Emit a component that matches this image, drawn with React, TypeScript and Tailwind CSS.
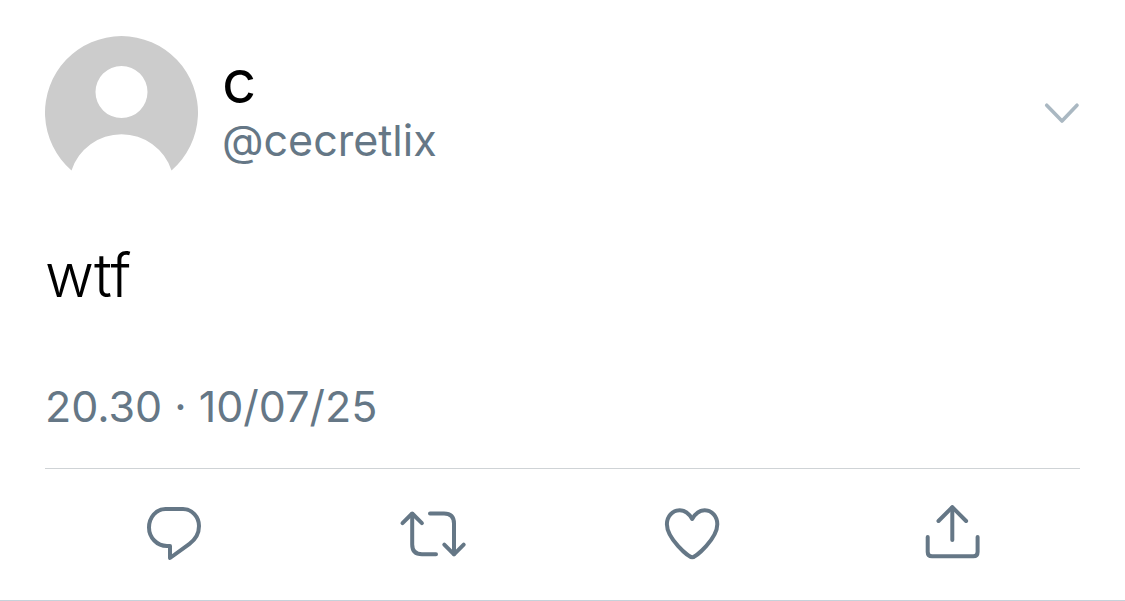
import type { ReactNode } from "react";

const Avatar = () => (
  <svg className="size-[153px] shrink-0" viewBox="0 0 153 153" role="img" aria-label="Profile">
    <path
      fill="#cccccc"
      fillRule="evenodd"
      d="M26.5 134.5 A76.5 76.5 0 1 1 126.5 134.5 A52.6 52.6 0 0 0 26.5 134.5 Z M76.5 30 a26 26 0 1 0 0 52 a26 26 0 0 0 0 -52 Z"
    />
  </svg>
);

type ActionProps = {
  label: string;
  viewBox: string;
  children: ReactNode;
};

const Action = ({ label, viewBox, children }: ActionProps) => (
  <button type="button" aria-label={label} className="flex cursor-pointer justify-center">
    <svg
      className="size-[72px]"
      viewBox={viewBox}
      fill="none"
      stroke="currentColor"
      strokeWidth="4"
      strokeLinecap="round"
      strokeLinejoin="round"
    >
      {children}
    </svg>
  </button>
);

const App = () => {
  return (
    <article className="border-b border-[#c5d2da] bg-white px-[45px] pt-9 pb-[31px] font-['Inter',sans-serif] text-[#657786]">
      <header className="flex items-start">
        <Avatar />
        <div className="ml-6 flex flex-col pt-[15px]">
          <h1 className="text-[60px] leading-[60px] font-normal text-black">c</h1>
          <a href="#cecretlix" className="text-[43px] leading-[58px]">
            @cecretlix
          </a>
        </div>
        <button type="button" aria-label="More options" className="mt-14 ml-auto cursor-pointer">
          <svg
            className="h-10 w-9"
            viewBox="0 0 36 40"
            fill="none"
            stroke="#aab8c2"
            strokeWidth="3.6"
            strokeLinecap="round"
            strokeLinejoin="round"
          >
            <path d="M2.7 13.2 L18 29 L33 13.2" />
          </svg>
        </button>
      </header>

      <p className="mt-[46px] text-[60px] leading-[80px] font-light text-black">wtf</p>

      <p className="mt-[62px] text-[43px] leading-[58px]">
        <time dateTime="2025-07-10T20:30">20.30 · 10/07/25</time>
      </p>

      <footer className="mt-[33px] grid grid-cols-4 border-t border-[#cfd3d6] pt-7">
        <Action label="Reply" viewBox="8 7 72 72">
          <path d="M35.5 19 H53 C62 19 69 27 69 36 C69 43 66 49 59.5 53.8 L40 68 V56 H37 C27 56 19 47.5 19 37.5 C19 27.5 26 19 35.5 19 Z" />
        </Action>
        <Action label="Retweet" viewBox="7 7 72 72">
          <path d="M12.5 33.2 L22.2 23.5 L31.9 33.2" />
          <path d="M22.2 24 V54.5 Q22.2 64.3 32 64.3 H46" />
          <path d="M40 23.4 H54 Q64 23.4 64 33.4 V64" />
          <path d="M54.3 54.6 L64 64.3 L73.7 54.6" />
        </Action>
        <Action label="Like" viewBox="6 7 72 72">
          <path d="M42.2 29 C38.8 23 34.6 20.2 29.7 20.2 C22.3 20.2 16.9 26.6 16.9 34.2 C16.9 48.5 38.5 67.2 42.2 67.2 C45.9 67.2 67.3 48.5 67.3 34.2 C67.3 26.6 62 20.2 54.7 20.2 C49.8 20.2 45.6 23 42.2 29 Z" />
        </Action>
        <Action label="Share" viewBox="5 7 72 72">
          <path d="M28.5 31 L42.3 17.2 L56.1 31" />
          <path d="M42.3 17.5 V50" />
          <path d="M17.7 47 V62 Q17.7 66.3 22 66.3 H63.3 Q67.6 66.3 67.6 62 V47" />
        </Action>
      </footer>
    </article>
  );
};

export default App;
